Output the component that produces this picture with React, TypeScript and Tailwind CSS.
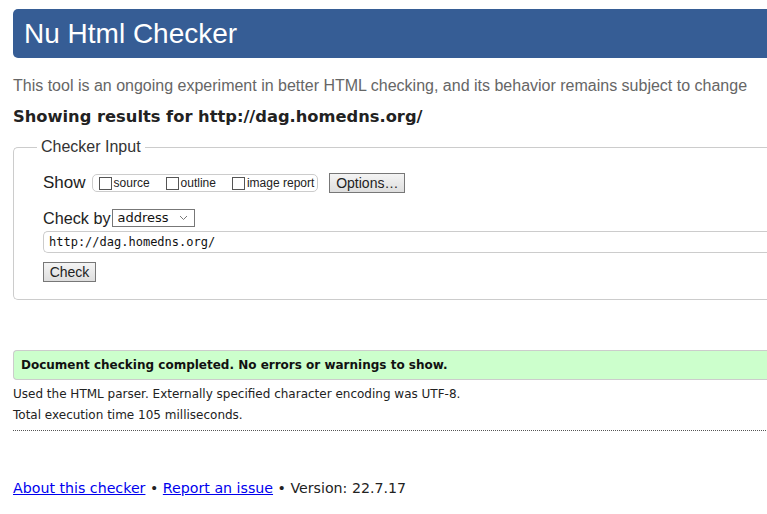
export default function App() {
  const options = ['source', 'outline', 'image report']

  return (
    <div className="w-full overflow-hidden bg-white">
      <div className="w-[1000px] pl-[13px] pt-[9px] font-['Liberation_Sans',Arial,sans-serif]">
        {/* Header bar */}
        <h1 className="h-[49px] rounded-l-[5px] bg-[#365d95] pl-[11px] text-[28px] leading-[49px] text-white">
          Nu Html Checker
        </h1>

        <p className="mt-[18px] text-[16px] leading-[20px] text-[#666]">
          This tool is an ongoing experiment in better HTML checking, and its behavior remains subject to change
        </p>

        <h2 className="mt-[11px] font-['DejaVu_Sans',Verdana,sans-serif] text-[16.3px] font-bold leading-[20px] text-[#222]">
          Showing results for http://dag.homedns.org/
        </h2>

        {/* Checker input fieldset */}
        <fieldset className="mt-[11px] h-[162px] rounded-l-[5px] border border-r-0 border-[#ccc] pl-[29px] pt-[6px]">
          <legend className="-ml-[6px] px-[4px] text-[16px] leading-[18px] text-[#333]">Checker Input</legend>

          <div className="mt-[11px] flex items-center">
            <span className="text-[17px] leading-[20px] text-[#222]">Show</span>
            <div className="ml-[6px] flex h-[18px] items-center gap-[16px] rounded-[5px] border border-[#ccc] pl-[6px] pr-[3px]">
              {options.map((o) => (
                <label key={o} className="flex items-center text-[12px] leading-[14px] text-[#222]">
                  <span className="mr-[2px] inline-block h-[13px] w-[13px] border border-[#555] bg-white" />
                  {o}
                </label>
              ))}
            </div>
            <button className="ml-[11px] h-[20px] w-[76px] border border-[#777] bg-gradient-to-b from-[#f4f4f4] to-[#dedede] text-[14px] leading-[18px] text-[#222]">
              Options…
            </button>
          </div>

          <div className="mt-[15px] flex items-center">
            <span className="text-[16.2px] leading-[20px] text-[#222]">Check by</span>
            <div className="ml-[2px] flex h-[18px] w-[83px] items-center justify-between border border-[#777] bg-white pl-[4px] pr-[6px]">
              <span className="font-['DejaVu_Sans',Verdana,sans-serif] text-[13px] leading-[16px] text-[#111]">address</span>
              <svg width="9" height="6" viewBox="0 0 9 6" fill="none" stroke="#777" strokeWidth="1">
                <path d="M1 1l3.5 3.5L8 1" />
              </svg>
            </div>
          </div>

          <div className="mt-[3px] flex h-[22px] items-center rounded-l-[5px] border border-r-0 border-[#ccc] pl-[5px]">
            <span className="font-['DejaVu_Sans_Mono',Consolas,monospace] text-[12px] leading-[14px] text-[#111]">
              http://dag.homedns.org/
            </span>
          </div>

          <button className="mt-[9px] h-[20px] w-[53px] border border-[#777] bg-gradient-to-b from-[#f4f4f4] to-[#dedede] text-[14px] leading-[18px] text-[#222]">
            Check
          </button>
        </fieldset>

        {/* Result */}
        <div className="mt-[50px] flex h-[30px] items-center rounded-l-[4px] border border-r-0 border-[#ccc] bg-[#ccffcc] pl-[7px]">
          <span className="font-['DejaVu_Sans',Verdana,sans-serif] text-[12px] font-bold text-[#111]">
            Document checking completed. No errors or warnings to show.
          </span>
        </div>

        <div className="font-['DejaVu_Sans',Verdana,sans-serif] text-[12px] text-[#222]">
          <p className="mt-[4px] leading-[21px]">Used the HTML parser. Externally specified character encoding was UTF-8.</p>
          <p className="leading-[21px]">Total execution time 105 milliseconds.</p>
        </div>

        <div className="mt-[4px] border-t border-dotted border-[#555]" />

        <p className="mt-[47px] font-['DejaVu_Sans',Verdana,sans-serif] text-[14.2px] leading-[20px] text-[#222]">
          <a href="#" className="text-[#0000ee] underline">About this checker</a>
          {' • '}
          <a href="#" className="text-[#0000ee] underline">Report an issue</a>
          {' • Version: 22.7.17'}
        </p>
      </div>
    </div>
  )
}
